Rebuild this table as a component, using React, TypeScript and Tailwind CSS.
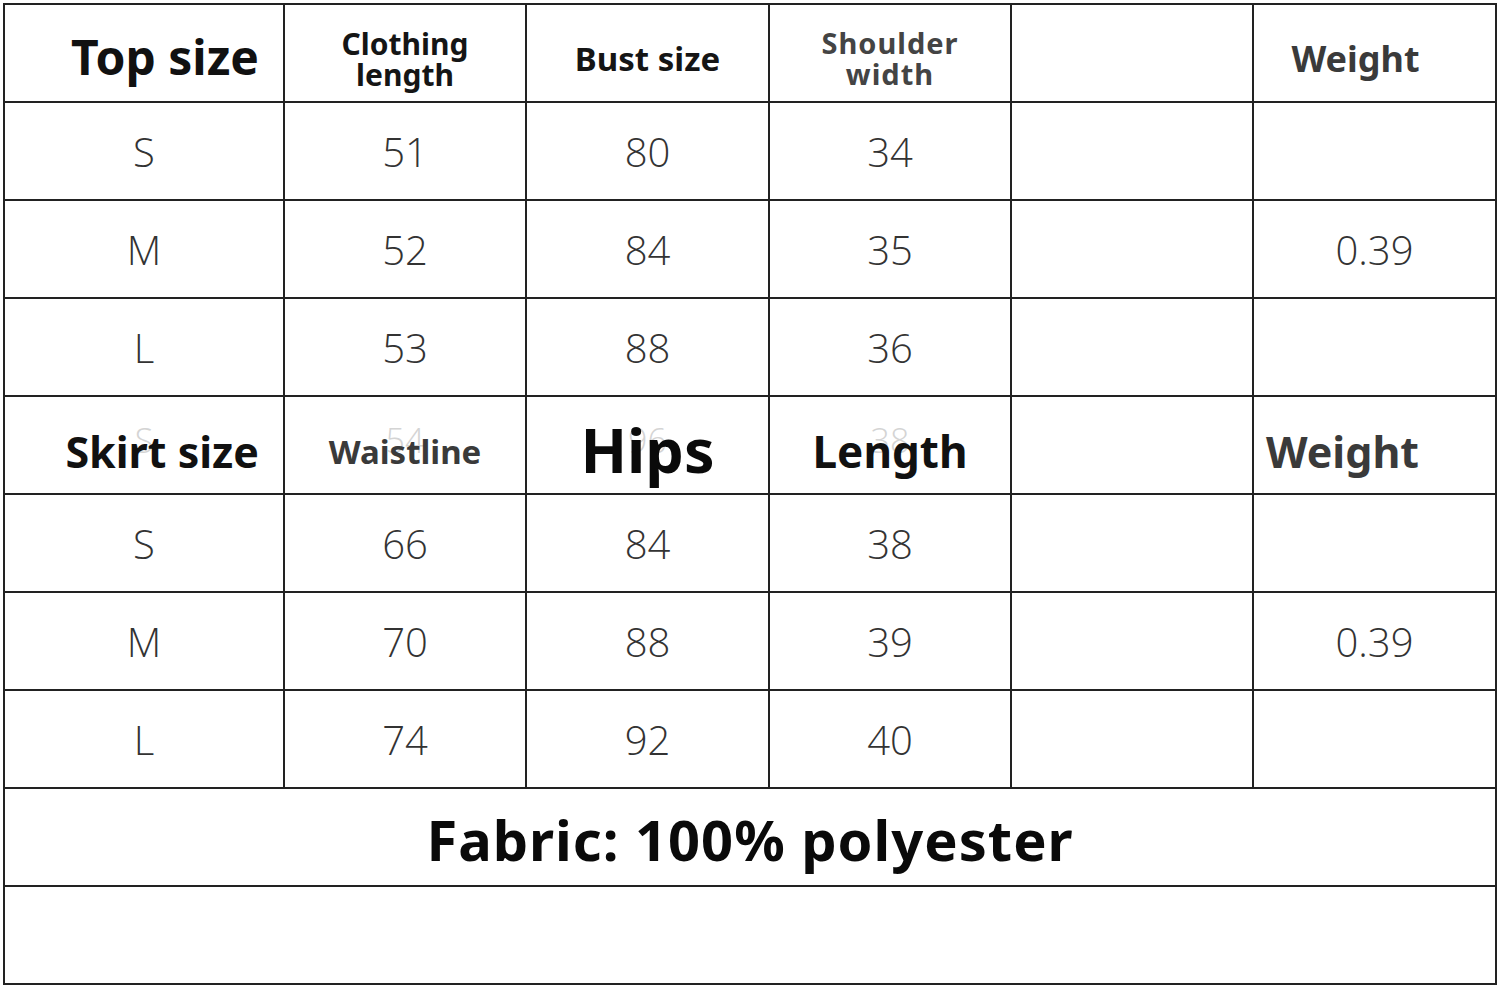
import React from "react";

const head = "font-['Noto_Sans','DejaVu_Sans',sans-serif] font-bold";
const num = "font-['Open_Sans','Noto_Sans',sans-serif] font-light text-[40px] text-[#333]";

function Cell({ children, className = "" }: { children?: React.ReactNode; className?: string }) {
  return <div className={`bg-white flex items-center justify-center ${className}`}>{children}</div>;
}

function Ghost({ text }: { text: string }) {
  return (
    <span className="absolute inset-0 flex items-center justify-center pb-[10px] font-['Open_Sans',sans-serif] font-light text-[34px] text-[#d4d4d4] pointer-events-none">
      {text}
    </span>
  );
}

const topRows = [
  ["S", "51", "80", "34", "", ""],
  ["M", "52", "84", "35", "", "0.39"],
  ["L", "53", "88", "36", "", ""],
];
const skirtRows = [
  ["S", "66", "84", "38", "", ""],
  ["M", "70", "88", "39", "", "0.39"],
  ["L", "74", "92", "40", "", ""],
];

function DataRows({ rows }: { rows: string[][] }) {
  return (
    <>
      {rows.map((r, i) =>
        r.map((v, j) => (
          <Cell key={`${i}-${j}`} className={`${num} pt-[2px]`}>
            {v}
          </Cell>
        ))
      )}
    </>
  );
}

export default function App() {
  return (
    <div className="w-[1500px] h-[992px] bg-white overflow-hidden">
      <div className="grid grid-cols-[278px_240px_241px_240px_240px_241px] grid-rows-[repeat(10,96px)] gap-[2px] p-[2px] bg-[#222] w-[1494px] ml-[3px] mt-[3px]">
        {/* top header */}
        <Cell className={`${head} text-[48px] text-[#111] justify-end pr-[24px] pt-[8px]`}>Top size</Cell>
        <Cell className={`${head} text-[30px] leading-[31px] text-[#151515] text-center pt-[12px]`}>
          <div>
            Clothing
            <br />
            length
          </div>
        </Cell>
        <Cell className={`${head} text-[33px] text-[#151515] pt-[12px]`}>Bust size</Cell>
        <Cell className={`${head} text-[29px] tracking-[1px] leading-[31px] text-[#444] text-center pt-[10px]`}>
          <div>
            Shoulder
            <br />
            width
          </div>
        </Cell>
        <Cell />
        <Cell className={`${head} text-[36px] text-[#3a3a3a] pr-[38px] pt-[12px]`}>Weight</Cell>

        <DataRows rows={topRows} />

        {/* skirt header */}
        <Cell className={`${head} relative text-[43px] text-[#111] justify-end pr-[24px] pt-[14px]`}>
          <Ghost text="S" />
          <span className="relative">Skirt size</span>
        </Cell>
        <Cell className={`${head} relative text-[33px] text-[#3a3a3a] pt-[14px]`}>
          <Ghost text="54" />
          <span className="relative">Waistline</span>
        </Cell>
        <Cell className={`${head} relative text-[61px] text-[#0a0a0a] pt-[10px]`}>
          <Ghost text="96" />
          <span className="relative">Hips</span>
        </Cell>
        <Cell className={`${head} relative text-[44px] text-[#111] pt-[12px]`}>
          <Ghost text="38" />
          <span className="relative">Length</span>
        </Cell>
        <Cell />
        <Cell className={`${head} text-[43px] text-[#3a3a3a] pr-[64px] pt-[14px]`}>Weight</Cell>

        <DataRows rows={skirtRows} />

        <Cell className={`${head} col-span-6 text-[56px] tracking-[1px] text-[#0a0a0a] pt-[4px]`}>Fabric: 100% polyester</Cell>
        <Cell className="col-span-6" />
      </div>
    </div>
  );
}
